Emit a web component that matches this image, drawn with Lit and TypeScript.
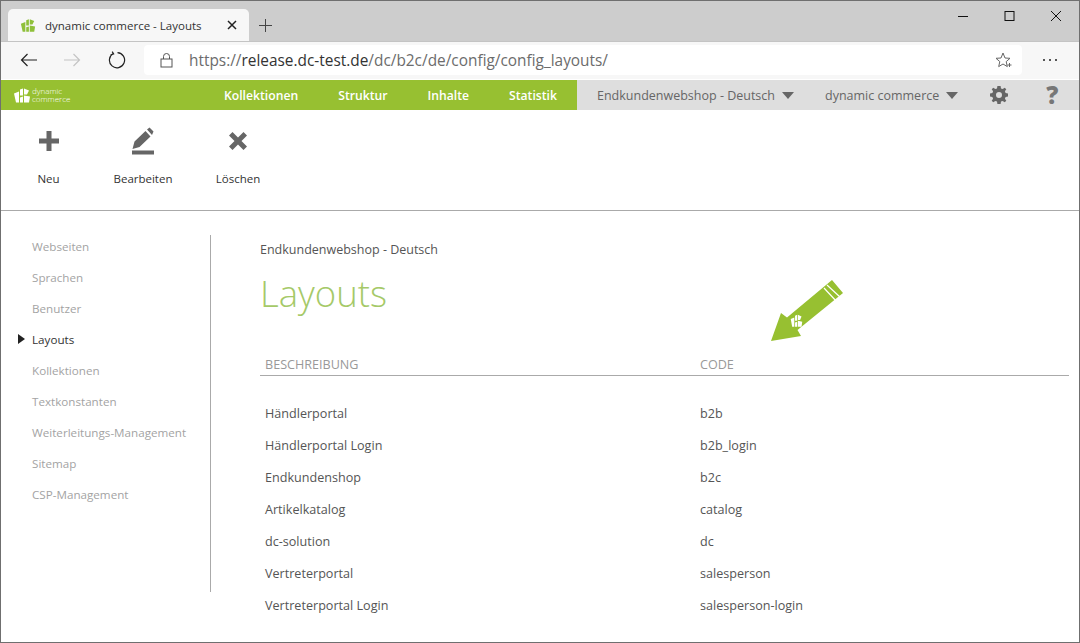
import { LitElement, html, css, svg } from "lit";
import { customElement } from "lit/decorators.js";

const navItems = ["Webseiten", "Sprachen", "Benutzer", "Layouts", "Kollektionen", "Textkonstanten", "Weiterleitungs-Management", "Sitemap", "CSP-Management"];
const rows = [
  ["Händlerportal", "b2b"],
  ["Händlerportal Login", "b2b_login"],
  ["Endkundenshop", "b2c"],
  ["Artikelkatalog", "catalog"],
  ["dc-solution", "dc"],
  ["Vertreterportal", "salesperson"],
  ["Vertreterportal Login", "salesperson-login"],
];

// logo mark: slanted slabs
const dcMark = (fill: string) => svg`
  <path fill=${fill} d="M1 6 L6 4 L6 15 L3 15 Z M7 2 L10 1 L10 8 L7 8 Z M7 10 L10 9 L10 15 L7 15 Z M11 1 L16 3 L14 7 L11 7 Z M11 8 L17 9 L16 15 L11 15 Z"/>
`;

@customElement("app-root")
export class AppRoot extends LitElement {
  static styles = css`
    :host {
      display: block;
      width: 1080px;
      height: 643px;
      box-sizing: border-box;
      border: 1px solid #6f6f6f;
      position: relative;
      overflow: hidden;
      background: #fff;
      font-family: "Open Sans", sans-serif;
      color: #444;
    }
    svg { display: block; flex: none; }

    .tabstrip {
      height: 40px;
      background: #cdcdcd;
      display: flex;
      align-items: flex-end;
      padding-left: 7px;
    }
    .tab {
      width: 241px;
      height: 32px;
      box-sizing: border-box;
      background: #f7f7f7;
      border-radius: 5px 5px 0 0;
      display: flex;
      align-items: center;
      padding: 0 12px 0 12px;
      font-size: 11.5px;
      color: #333;
    }
    .tab-title { flex: 1; margin-left: 9px; white-space: nowrap; }
    .newtab { margin: 0 0 8px 9px; }
    .winbtns {
      margin-left: auto;
      align-self: flex-start;
      display: flex;
      gap: 35px;
      padding: 9px 17px 0 0;
    }

    .addrbar {
      height: 38px;
      background: #f7f7f7;
      display: flex;
      align-items: center;
      padding: 0 0 1px 0;
      border-top: 1px solid #c4c4c4;
      box-sizing: border-box;
    }
    .navbtn { width: 18px; margin-left: 19px; }
    .navbtn + .navbtn { margin-left: 25px; }
    .navbtn:nth-child(3) { margin-left: 27px; }
    .url {
      margin-left: 18px;
      width: 878px;
      height: 30px;
      box-sizing: border-box;
      background: #fff;
      border-radius: 4px;
      display: flex;
      align-items: center;
      padding: 0 10px 0 16px;
      font-size: 15.4px;
      color: #6c6c6c;
      white-space: nowrap;
    }
    .url b { font-weight: 400; color: #333; }
    .url span { margin-left: 16px; }
    .url svg:last-child { margin-left: auto; }
    .more { margin-left: 20px; }

    .topbar {
      height: 30px;
      margin-top: 1px;
      display: flex;
      background: #97c031;
      font-size: 12.5px;
    }
    .brand {
      width: 223px;
      padding-left: 12px;
      box-sizing: border-box;
      display: flex;
      align-items: center;
      gap: 1px;
      color: #fff;
    }
    .brand small { font-size: 8px; line-height: 8px; font-weight: 300; }
    .menu {
      width: 353px;
      display: flex;
      align-items: center;
      gap: 40px;
      color: #fff;
      font-weight: 600;
      font-size: 12.2px;
    }
    .meta {
      flex: 1;
      background: #dedede;
      display: flex;
      align-items: center;
      color: #666;
      padding-left: 20px;
    }
    .meta .caret {
      width: 0;
      height: 0;
      border: 6.5px solid transparent;
      border-top: 7px solid #666;
      border-bottom: 0;
      margin-left: 7px;
    }
    .meta .second { margin-left: 31px; }
    .meta .gear { margin-left: 32px; }
    .meta .help {
      margin-left: 38px;
      font-size: 24px;
      font-weight: 800;
      line-height: 1;
      color: #777;
    }

    .actions {
      height: 101px;
      box-sizing: border-box;
      border-bottom: 1px solid #aaa;
      display: flex;
      padding-top: 17px;
      font-size: 11.5px;
      color: #333;
    }
    .action {
      display: flex;
      flex-direction: column;
      align-items: center;
      gap: 16px;
      width: 96px;
      margin-left: -1px;
    }
    .action:first-child { width: 95px; margin-left: 0; }
    .icon { height: 28px; display: flex; align-items: center; }

    .main { display: flex; padding-top: 24px; }
    .side {
      width: 210px;
      height: 357px;
      box-sizing: border-box;
      border-right: 1px solid #aaa;
      padding-left: 31px;
      font-size: 11.65px;
      color: #a3a3a3;
      flex: none;
    }
    .side div {
      height: 31px;
      line-height: 23px;
      position: relative;
      white-space: nowrap;
    }
    .side .on { color: #333; }
    .side .on::before {
      content: "";
      position: absolute;
      left: -14px;
      top: 6px;
      border-left: 7px solid #222;
      border-top: 5.5px solid transparent;
      border-bottom: 5.5px solid transparent;
    }

    .content { flex: 1; padding: 6px 10px 0 49px; }
    .crumb { font-size: 12.5px; color: #555; line-height: 17px; }
    h1 {
      margin: 12px 0 0;
      font-size: 36.5px;
      font-weight: 300;
      color: #a5c968;
      line-height: 46px;
    }
    .table-head, .row {
      display: grid;
      grid-template-columns: 435px 1fr;
      padding-left: 5px;
    }
    .table-head {
      margin-top: 40px;
      height: 19px;
      border-bottom: 1px solid #aaa;
      font-size: 12.6px;
      color: #999;
      line-height: 18px;
    }
    .rows { margin-top: 22px; }
    .row { height: 32px; line-height: 32px; font-size: 12.6px; color: #555; }

    .arrow { position: absolute; left: 739px; top: 269px; }
  `;

  render() {
    return html`
      <div class="tabstrip">
        <div class="tab">
          <svg width="16" height="15" viewBox="0 0 18 16">${dcMark("#8fc03a")}</svg>
          <span class="tab-title">dynamic commerce - Layouts</span>
          <svg width="10" height="10" viewBox="0 0 10 10"><path d="M1 1 L9 9 M9 1 L1 9" stroke="#222" stroke-width="1.5"/></svg>
        </div>
        <svg class="newtab" width="15" height="15" viewBox="0 0 15 15"><path d="M7.5 1 V14 M1 7.5 H14" stroke="#444" stroke-width="1"/></svg>
        <div class="winbtns">
          <svg width="12" height="12" viewBox="0 0 12 12"><path d="M1 6.5 H11" stroke="#111"/></svg>
          <svg width="11" height="12" viewBox="0 0 11 12"><rect x="1" y="1.5" width="9" height="9" fill="none" stroke="#111"/></svg>
          <svg width="12" height="12" viewBox="0 0 12 12"><path d="M1 1 L11 11 M11 1 L1 11" stroke="#111"/></svg>
        </div>
      </div>

      <div class="addrbar">
        <svg class="navbtn" width="18" height="14" viewBox="0 0 18 14"><path d="M17 7 H1.5 M7.5 1 L1.5 7 L7.5 13" fill="none" stroke="#222" stroke-width="1.2"/></svg>
        <svg class="navbtn" width="18" height="14" viewBox="0 0 18 14"><path d="M1 7 H16.5 M10.5 1 L16.5 7 L10.5 13" fill="none" stroke="#c4c4c4" stroke-width="1.2"/></svg>
        <svg class="navbtn" width="18" height="18" viewBox="0 0 18 18"><path d="M5.2 2.6 A7.6 7.6 0 1 0 9.5 1.6 M4.2 0.6 L5.6 3 L2.6 3.9" fill="none" stroke="#222" stroke-width="1.2"/></svg>
        <div class="url">
          <svg width="13" height="16" viewBox="0 0 13 16"><path d="M3.5 7 V4.5 A3 3 0 0 1 9.5 4.5 V7" fill="none" stroke="#555"/><rect x="1" y="7" width="11" height="8" fill="none" stroke="#555"/></svg>
          <span>https://<b>release.dc-test.de</b>/dc/b2c/de/config/config_layouts/</span>
          <svg width="17" height="16" viewBox="0 0 17 16"><path d="M8 1 L10 6 L15 6.3 L11.2 9.6 L12.3 14.6 L8 12 L3.7 14.6 L4.8 9.6 L1 6.3 L6 6 Z" fill="none" stroke="#666"/><path d="M12.5 13 H16.5 M14.5 11 V15" stroke="#666"/></svg>
        </div>
        <svg class="more" width="16" height="4" viewBox="0 0 16 4"><circle cx="2" cy="2" r="1" fill="#222"/><circle cx="8" cy="2" r="1" fill="#222"/><circle cx="14" cy="2" r="1" fill="#222"/></svg>
      </div>

      <div class="topbar">
        <div class="brand">
          <svg width="18" height="17" viewBox="0 0 18 16">${dcMark("#fff")}</svg>
          <small>dynamic<br />commerce</small>
        </div>
        <div class="menu">
          <span>Kollektionen</span><span>Struktur</span><span>Inhalte</span><span>Statistik</span>
        </div>
        <div class="meta">
          <span>Endkundenwebshop - Deutsch</span><i class="caret"></i>
          <span class="second">dynamic commerce</span><i class="caret"></i>
          <svg class="gear" width="18" height="18" viewBox="0 0 18 18">
            <path fill="#666" fill-rule="evenodd" d="M7.4 0 H10.6 L11 2.4 L12.7 3.1 L14.7 1.7 L16.3 3.3 L14.9 5.3 L15.6 7 L18 7.4 V10.6 L15.6 11 L14.9 12.7 L16.3 14.7 L14.7 16.3 L12.7 14.9 L11 15.6 L10.6 18 H7.4 L7 15.6 L5.3 14.9 L3.3 16.3 L1.7 14.7 L3.1 12.7 L2.4 11 L0 10.6 V7.4 L2.4 7 L3.1 5.3 L1.7 3.3 L3.3 1.7 L5.3 3.1 L7 2.4 Z M9 6 A3 3 0 1 0 9 12 A3 3 0 1 0 9 6 Z"/>
          </svg>
          <span class="help">?</span>
        </div>
      </div>

      <div class="actions">
        <div class="action">
          <div class="icon"><svg width="22" height="22" viewBox="0 0 22 22"><path fill="#666" d="M8.5 1 H13.5 V8.5 H21 V13.5 H13.5 V21 H8.5 V13.5 H1 V8.5 H8.5 Z"/></svg></div>
          <span>Neu</span>
        </div>
        <div class="action">
          <div class="icon"><svg width="22" height="28" viewBox="0 0 22 28">
            <path fill="#666" d="M0.5 22 L2.5 14.5 L13.5 4 L18.5 9.5 L7.5 20 Z M15 2.5 L17.5 0.5 L21.5 4.5 L20 8 Z"/>
            <rect y="23.5" width="22" height="4" fill="#666"/>
          </svg></div>
          <span>Bearbeiten</span>
        </div>
        <div class="action">
          <div class="icon"><svg width="20" height="20" viewBox="0 0 20 20"><path fill="#666" d="M4.5 1 L10 6.5 L15.5 1 L19 4.5 L13.5 10 L19 15.5 L15.5 19 L10 13.5 L4.5 19 L1 15.5 L6.5 10 L1 4.5 Z"/></svg></div>
          <span>Löschen</span>
        </div>
      </div>

      <div class="main">
        <nav class="side">
          ${navItems.map((n) => html`<div class=${n === "Layouts" ? "on" : ""}>${n}</div>`)}
        </nav>
        <div class="content">
          <div class="crumb">Endkundenwebshop - Deutsch</div>
          <h1>Layouts</h1>
          <div class="table-head"><span>BESCHREIBUNG</span><span>CODE</span></div>
          <div class="rows">
            ${rows.map((r) => html`<div class="row"><span>${r[0]}</span><span>${r[1]}</span></div>`)}
          </div>
        </div>
      </div>

      <svg class="arrow" width="110" height="80" viewBox="0 0 110 80">
        <path fill="#97c031" d="M31 71 L41 43 L47 47.5 L92 10 L103 23 L57.5 60 L61 66 Z"/>
        <path d="M84 18 L97 32 M87 15 L100 27" stroke="#fff" stroke-width="1.2"/>
        <g transform="translate(50 44) scale(0.72 0.85)">${dcMark("#fff")}</g>
      </svg>
    `;
  }
}
